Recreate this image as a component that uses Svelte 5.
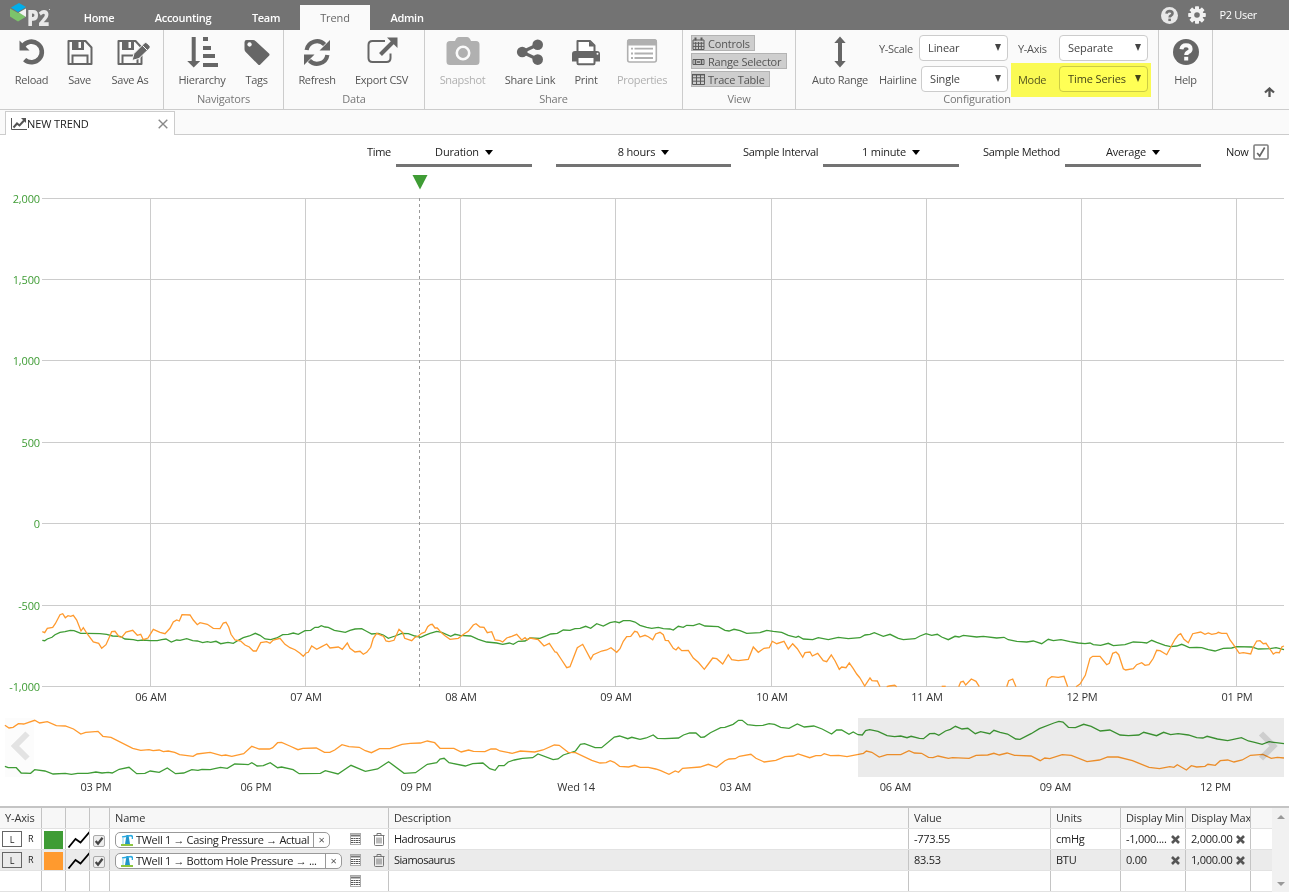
<script lang="ts">
  const menu = [
    { label: 'Home', width: 70 },
    { label: 'Accounting', width: 98 },
    { label: 'Team', width: 68 },
    { label: 'Trend', width: 70, active: true },
    { label: 'Admin', width: 74 },
  ];

  const groups = [
    {
      title: '', width: 164,
      tools: [
        { icon: 'reload', label: 'Reload', width: 47 },
        { icon: 'save', label: 'Save', width: 49 },
        { icon: 'saveas', label: 'Save As', width: 52 },
      ],
    },
    {
      title: 'Navigators', width: 120,
      tools: [
        { icon: 'hierarchy', label: 'Hierarchy', width: 60 },
        { icon: 'tag', label: 'Tags', width: 49 },
      ],
    },
    {
      title: 'Data', width: 141,
      tools: [
        { icon: 'refresh', label: 'Refresh', width: 50 },
        { icon: 'export', label: 'Export CSV', width: 79 },
      ],
    },
    {
      title: 'Share', width: 258,
      tools: [
        { icon: 'camera', label: 'Snapshot', width: 59, disabled: true },
        { icon: 'share', label: 'Share Link', width: 76 },
        { icon: 'print', label: 'Print', width: 36 },
        { icon: 'properties', label: 'Properties', width: 76, disabled: true },
      ],
    },
  ];

  const views = [
    { icon: 'calendar', label: 'Controls', width: 64 },
    { icon: 'range', label: 'Range Selector', width: 96 },
    { icon: 'grid', label: 'Trace Table', width: 79 },
  ];

  const GREEN = '#3f9c35';
  const ORANGE = '#ff9a2e';

  // A series is a list of blocks. Each block has its own start and sampling
  // resolution (units per pixel); y is always in thirds of a pixel.
  type Block = { x: number; res: number; pts: string };

  function line(block: Block, top: number) {
    return block.pts
      .split(' ')
      .map((p) => {
        const [x, y] = p.split(',').map(Number);
        return `${(block.x + x / block.res).toFixed(1)},${(top + y / 3).toFixed(1)}`;
      })
      .join(' ');
  }

  const casing: Block[] = [
    { x: 0, res: 3, pts: '127,151 134,152 142,147 156,142 165,134 180,127 195,125 211,121 222,122 242,130 260,130 300,131 320,133 338,138 360,139 375,147 400,149 413,152 430,150 450,152 472,152 485,149 498,147 514,156 530,150 540,151 560,146 578,152 592,153 608,158 622,155 632,157 648,154 662,161 684,157 700,160 715,151 730,143 748,138 766,130 780,136 795,147 812,149 830,144 848,134 865,133 880,129 895,133 915,122 932,121 945,112 955,112 964,107 975,111 985,112 1003,121 1020,124 1036,127 1050,121 1065,117 1085,116 1098,123 1115,132 1135,130 1150,135 1165,145 1185,138 1205,130 1225,131 1245,138 1262,142 1275,136 1290,130' },
    { x: 430, res: 3, pts: '0,130 20,124 35,127 62,139 75,133 90,136 122,138 145,148 170,156 200,159 218,163 238,159 250,163 265,154 285,153 300,144 330,145 350,137 362,132 382,130 400,120 420,121 435,116 450,115 467,109 482,115 500,101 520,108 540,98 555,95 568,98 580,92 600,92 615,96 630,106 650,112 665,115 685,112 700,116 720,117 730,120 745,109 760,112 770,106 790,107 808,101 825,108 865,110 885,121 897,123 912,118 930,122 950,130 990,128 1010,121 1030,124 1055,127 1075,136 1098,142 1105,139 1120,147 1148,149 1165,143 1195,149 1225,142 1255,146 1290,143' },
    { x: 860, res: 3, pts: '0,143 15,135 30,133 43,128 70,139 90,133 115,145 130,149 165,146 180,138 198,131 215,136 232,133 245,141 265,149 285,139 297,141 310,136 350,141 370,139 410,144 432,142 445,149 470,154 500,156 520,153 545,161 565,148 580,152 603,149 630,155 655,159 675,161 690,159 700,164 722,166 745,160 760,167 795,164 820,156 845,157 860,159 875,151 890,157 915,166 932,170 950,168 965,163 975,167 988,173 1010,172 1025,173 1045,179 1065,183 1090,175 1115,174 1130,170 1175,171 1195,177 1230,176 1248,173 1272,179' },
  ];

  const bottomHole: Block[] = [
    { x: 0, res: 3, pts: '127,125 134,128 142,115 158,112 166,101 180,74 188,71 196,83 204,77 212,79 220,76 230,90 243,123 250,113 262,132 280,156 296,160 305,175 318,164 328,142 335,125 345,124 357,140 365,142 378,126 398,121 412,136 422,133 430,149 444,144 460,118 480,127 495,131 510,115 520,96 530,90 538,93 546,74 570,75 580,90 592,104 600,98 622,103 640,115 660,116 670,99 678,97 686,111 693,133 705,150 722,153 735,165 748,171 760,183 769,183 782,158 800,155 810,160 820,150 840,145 855,163 870,173 885,179 900,190 910,199 918,189 925,187 935,168 950,178 965,170 980,162 990,174 1015,171 1027,178 1042,159 1050,175 1065,186 1080,184 1090,193 1100,187 1112,172 1120,145 1130,130 1145,137 1150,138 1158,153 1167,155 1182,151 1197,118 1208,128 1214,145 1235,152 1245,142 1255,138 1265,130 1275,126 1283,110 1290,104' },
    { x: 430, res: 3, pts: '0,104 7,103 15,114 22,114 33,127 45,137 60,148 85,145 105,130 115,124 130,105 138,101 150,111 162,112 172,128 185,125 195,150 210,152 218,156 230,144 245,139 260,133 275,150 285,143 292,150 300,144 325,149 342,168 358,160 375,186 380,187 395,210 410,233 420,230 442,173 458,163 482,208 490,194 515,183 530,180 543,173 560,187 570,176 580,154 590,140 602,139 614,124 622,126 630,141 645,136 655,140 668,149 677,132 690,127 700,134 706,151 715,152 730,175 738,180 745,172 755,182 775,181 790,204 805,217 823,238 835,222 848,204 860,206 878,222 895,194 905,209 925,212 955,208 970,171 985,187 1002,175 1018,173 1027,154 1040,161 1062,154 1075,177 1088,161 1102,176 1118,202 1125,188 1140,186 1147,198 1163,190 1180,212 1190,215 1204,195 1215,212 1228,238 1235,231 1248,233 1258,219 1270,236 1280,252 1290,264' },
    { x: 860, res: 3, pts: '0,264 14,288 30,264 36,272 52,273 60,290' },
    { x: 860, res: 3, pts: '80,290 88,288 104,286 110,290' },
    { x: 860, res: 3, pts: '245,289 257,289' },
    { x: 860, res: 3, pts: '296,290 302,276 310,274 317,285 334,267 348,274 358,290' },
    { x: 860, res: 3, pts: '440,290 446,272 458,267 468,290' },
    { x: 860, res: 3, pts: '558,290 564,268 575,260 595,262 612,259 623,290' },
    { x: 860, res: 3, pts: '648,290 660,282 676,256 690,205 698,199 720,199 740,224 748,220 758,190 768,186 776,194 790,236 797,240 820,236 830,224 845,218 855,226 867,224 880,205 890,181 900,182 920,194 928,179 945,148 955,135 962,131 972,148 985,158 998,131 1022,126 1035,133 1045,129 1055,133 1070,130 1075,127 1085,130 1100,130 1110,150 1120,163 1138,190 1150,188 1172,192 1178,175 1190,153 1200,152 1210,161 1218,160 1225,170 1240,192 1248,187 1258,188 1266,170 1272,168' },
  ];

  const casingDay: Block[] = [
    { x: 0, res: 2.45, pts: '12,184 20,188 40,188 52,204 75,205 85,194 110,198 130,207 160,205 175,208 190,205 215,205 235,201 250,204 265,202 275,204 292,193 316,187 335,206 355,205 368,198 390,202 410,189 430,206 450,204 470,194 485,196 495,193 515,194 540,187 557,190 575,177 600,178 608,179 617,173 630,183 645,182 662,173 680,188 690,186 718,194 733,206 785,205 797,197 828,207 860,181 895,199 925,192 952,170 990,205 1018,203 1047,178 1070,173 1078,162 1088,160 1100,173 1140,183 1158,176 1183,174 1200,191 1213,196 1222,182 1235,182 1245,171 1260,165 1280,160 1305,158 1318,147 1355,164 1367,162 1380,150 1410,138 1422,118 1432,116 1458,128 1474,128 1505,96 1518,93 1538,101 1548,97 1568,103' },
    { x: 640, res: 2.416, pts: '0,103 15,99 32,90 42,100 60,101 93,99 105,90 120,84 135,84 147,97 155,96 170,83 195,68 205,67 225,58 238,46 247,46 260,59 280,62 297,61 312,56 325,58 340,67 360,70 380,57 397,66 420,63 440,72 463,87 475,75 487,75 505,88 515,81 527,89 537,90 545,77 555,74 575,79 597,92 615,95 630,93 645,98 655,94 675,100 685,101 700,86 712,85 722,91 738,78 750,73 762,64 778,72 792,70 810,86 823,80 845,86 855,76 870,82 888,87 908,102 918,103 945,86 965,71 1000,54 1012,49 1022,51 1035,67 1052,68 1072,58 1090,64 1112,78 1135,75 1160,90 1180,92 1205,90 1217,82 1248,92 1265,82 1282,89 1300,86 1325,90 1345,98 1360,99 1370,94 1395,102 1420,107 1453,98 1470,108 1485,112 1503,118 1520,110 1556,116' },
  ];

  const bottomHoleDay: Block[] = [
    { x: 0, res: 2.45, pts: '12,61 22,69 32,67 45,56 58,57 85,46 97,54 116,50 138,62 160,63 180,72 198,87 210,82 240,79 252,94 272,97 325,130 345,136 365,134 375,137 390,135 400,140 412,138 428,142 440,149 473,154 483,147 515,142 543,152 553,150 568,154 597,146 617,124 635,132 660,132 668,128 680,113 690,112 710,123 730,134 742,130 775,129 795,142 808,142 820,135 838,119 855,125 880,127 895,137 910,143 930,131 955,131 985,118 1005,115 1030,114 1047,108 1065,113 1078,130 1100,130 1112,130 1130,141 1148,135 1160,139 1188,140 1203,132 1215,132 1225,138 1255,145 1275,138 1310,141 1330,135 1358,120 1370,121 1392,142 1410,143 1450,166 1470,174 1485,173 1495,167 1505,172 1518,184 1540,186 1555,181 1568,187' },
    { x: 640, res: 2.416, pts: '0,187 20,187 38,192 50,197 70,208 85,198 93,202 103,190 145,186 165,178 185,187 205,167 215,162 230,161 240,154 268,148 280,160 300,171 328,166 350,155 370,153 382,147 410,158 425,152 437,152 445,146 460,152 480,151 500,155 540,145 547,138 560,142 578,156 597,149 630,149 650,137 663,144 680,145 697,157 708,158 720,153 745,160 755,158 795,160 812,151 840,150 855,145 868,150 887,144 905,151 945,153 967,167 978,159 990,161 1020,149 1042,151 1080,170 1110,165 1130,156 1155,156 1190,167 1230,187 1255,191 1280,185 1290,187 1298,179 1320,195 1332,182 1345,186 1365,184 1372,178 1390,181 1402,167 1420,165 1435,171 1455,165 1475,151 1505,148 1525,160 1540,157 1556,159' },
  ];

  const yTicks = [
    { label: '2,000', y: 28.5 },
    { label: '1,500', y: 109.5 },
    { label: '1,000', y: 190.5 },
    { label: '500', y: 272.5 },
    { label: '0', y: 353.5 },
    { label: '-500', y: 435.5 },
    { label: '-1,000', y: 516.5 },
  ];
  const xTicks = [
    { label: '06 AM', x: 150.5 },
    { label: '07 AM', x: 305.5 },
    { label: '08 AM', x: 460.5 },
    { label: '09 AM', x: 615.5 },
    { label: '10 AM', x: 771.5 },
    { label: '11 AM', x: 926.5 },
    { label: '12 PM', x: 1081.5 },
    { label: '01 PM', x: 1236.5 },
  ];
  const dayTicks = [
    { label: '03 PM', x: 96 },
    { label: '06 PM', x: 256 },
    { label: '09 PM', x: 416 },
    { label: 'Wed 14', x: 576 },
    { label: '03 AM', x: 735.5 },
    { label: '06 AM', x: 895.5 },
    { label: '09 AM', x: 1055.5 },
    { label: '12 PM', x: 1215.5 },
  ];

  const traces = [
    { color: GREEN, name: 'TWell 1 → Casing Pressure → Actual', width: 215, description: 'Hadrosaurus', value: '-773.55', units: 'cmHg', min: '-1,000....', max: '2,000.00' },
    { color: ORANGE, name: 'TWell 1 → Bottom Hole Pressure → ...', width: 227, description: 'Siamosaurus', value: '83.53', units: 'BTU', min: '0.00', max: '1,000.00' },
  ];
</script>

{#snippet question(size: number, bg: string, fg: string)}
  <svg width={size} height={size} viewBox="0 0 26 26">
    <circle cx="13" cy="13" r="13" fill={bg} />
    <path d="M8.4 10.2Q9 6.3 13 6.3q4.6 0 4.600 3.600 0 2-2.200 3.100-2.200 1.200-2.200 3.100" fill="none" stroke={fg} stroke-width="4" />
    <rect x="11.2" y="17.8" width="4" height="3.7" fill={fg} />
  </svg>
{/snippet}

{#snippet glyph(name: string)}
  <svg class="glyph" width="40" height="32" viewBox="0 0 40 32">
    {#if name === 'reload'}
      <path d="M11 10.200A10.300 10.300 0 1 1 12.600 23.600" fill="none" stroke="currentColor" stroke-width="4.600" />
      <path d="M7.500 4.500v10h10z" fill="currentColor" />
    {:else if name === 'save' || name === 'saveas'}
      <path d="M8.500 5h17l6 6.500V28h-23z" fill="none" stroke="currentColor" stroke-width="2" stroke-linejoin="round" />
      <path d="M12 5h12v9H12zM18.500 6v6H21V6z" fill="currentColor" fill-rule="evenodd" />
      <path d="M12.500 28v-8.500h15V28" fill="none" stroke="currentColor" stroke-width="2" />
      {#if name === 'saveas'}
        <path d="M22 24.500l2-7 10.500-10.500q1.200-1 2.400 0l3 3q1 1 0 2L29 22.500z" fill="currentColor" stroke="#fafafa" />
        <path d="M32.500 9.500l5 5" stroke="#fafafa" />
      {/if}
    {:else if name === 'hierarchy'}
      <path d="M9.700 1h4v24h4.500l-6.500 6.500L5.200 25h4.500zM21 1h5v4h-5zM21 10h8v4h-8zM21 18h12v4H21zM21 27h15v4H21z" fill="currentColor" />
    {:else if name === 'tag'}
      <path d="M7.500 6.200q0-2.200 2.200-2.200H16q1.500 0 2.800 1.200L32 17.600q1.100 1.100 0 2.200l-8.700 8.700q-1.100 1-2.200 0L8.700 16q-1.200-1.300-1.200-2.800zM12.500 6.300a2.200 2.200 0 1 0 .1 0z" fill="currentColor" fill-rule="evenodd" />
    {:else if name === 'refresh'}
      <path d="M9.600 14a10.500 10.500 0 0 1 18-5.500M30.400 19a10.500 10.500 0 0 1-18 5.500" fill="none" stroke="currentColor" stroke-width="4.200" />
      <path d="M33 4v10.500H22.500zM7 29V18.500h10.500z" fill="currentColor" />
    {:else if name === 'export'}
      <path d="M23 5H10.500q-4 0-4 4v13q0 4 4 4h14q4 0 4-4v-4.500" fill="none" stroke="currentColor" stroke-width="2" />
      <path d="M18.500 18.500L31 6" stroke="currentColor" stroke-width="4" />
      <path d="M25 1.500h10.500V12z" fill="currentColor" />
    {:else if name === 'camera'}
      <path d="M12 5q1.500-4 4-4h8q2.500 0 4 4h5q3.500 0 3.500 3.500v17q0 3.500-3.500 3.500H7q-3.500 0-3.500-3.500v-17Q3.500 5 7 5z" fill="currentColor" />
      <circle cx="20" cy="17" r="6.200" fill="none" stroke="#fafafa" stroke-width="2.600" />
    {:else if name === 'share'}
      <path d="M28 8.500L12 16l16 7.500" fill="none" stroke="currentColor" stroke-width="3.200" />
      <circle cx="12.200" cy="16" r="5.300" fill="currentColor" />
      <circle cx="27.700" cy="8.700" r="5.300" fill="currentColor" />
      <circle cx="27.700" cy="23.600" r="5.300" fill="currentColor" />
    {:else if name === 'print'}
      <path d="M11.500 16V5H24l4.500 4.500V16" fill="#fff" stroke="currentColor" stroke-width="2" stroke-linejoin="round" />
      <path d="M23 5v5.500h5.500z" fill="currentColor" />
      <path d="M6 18q0-3 3-3h22q3 0 3 3v7.500H6z" fill="currentColor" />
      <rect x="11.500" y="21" width="17" height="7.200" rx="1" fill="#fff" stroke="currentColor" stroke-width="2" />
      <circle cx="31.500" cy="17.800" r="1" fill="#fff" />
    {:else if name === 'properties'}
      <rect x="5.700" y="4" width="28.600" height="22" rx="2" fill="#fff" stroke="currentColor" stroke-width="1.600" />
      <path d="M5 9.500V5.500Q5 3 7.500 3h25Q35 3 35 5.500v4z" fill="currentColor" />
      <path d="M9 12.700h2m1.500 0H31M9 17.500h2m1.500 0H31M9 22h2m1.500 0H31" stroke="currentColor" stroke-width="1.800" />
    {:else if name === 'auto'}
      <path d="M20 .5l5.700 6.500h-3.700v18h3.700L20 31.500 14.300 25H18V7h-3.700z" fill="currentColor" />
    {/if}
  </svg>
{/snippet}

{#snippet smallGlyph(name: string)}
  <svg width="13" height="13" viewBox="0 0 13 13" fill="none" stroke="#5a5a5a">
    {#if name === 'calendar'}
      <path d="M1 3h11v9.500H1zM1 6.200h11M1 9.400h11M3.700 5v7M6.500 5v7M9.300 5v7" />
      <path d="M3.500 .5v3M9.500 .5v3" stroke-width="2" />
    {:else if name === 'range'}
      <path d="M1 4.500h11v5H1z" />
      <path d="M3.500 4v6M9.500 4v6M5 7h3" stroke-width="1.500" />
    {:else}
      <path d="M.5 1.500h12v10H.5zM.5 4.800h12M.5 8.200h12M4.500 1.500v10M8.500 1.500v10" />
      <path d="M0 1.700h13" stroke-width="1.500" />
    {/if}
  </svg>
{/snippet}

{#snippet calculator()}
  <svg width="11" height="12" viewBox="0 0 11 12">
    <rect x=".5" y=".5" width="10" height="11" fill="#fff" stroke="#aaa" />
    <path d="M1 2.500h9" stroke="#777" stroke-width="2" />
    <path d="M1 5.500h9M1 7.500h9M1 9.500h9" stroke="#555" stroke-dasharray="2 .5" />
  </svg>
{/snippet}

<div class="app">
  <header>
    <div class="logo">
      <svg width="44" height="27" viewBox="0 0 44 27">
        <path d="M1 4.500L9 0l7 4-8 5z" fill="#00aeea" />
        <path d="M0 5.500L8 10l6.500-3.500V13l1 1L8 18.500 0 13.500z" fill="#7cc46b" />
        <path d="M9 9.500l7-4V14z" fill="#f2f2f2" />
        <text x="17" y="22.500" textLength="22" lengthAdjust="spacingAndGlyphs">P2</text>
        <circle cx="39.500" cy="6.500" r=".6" fill="#ddd" />
      </svg>
    </div>
    <nav>
      {#each menu as item}
        <span class="menu-item" class:active={item.active} style="width: {item.width}px">{item.label}</span>
      {/each}
    </nav>
    <div class="account">
      {@render question(17, '#e8e8e8', '#737373')}
      <svg width="18" height="18" viewBox="-9 -9 18 18">
        <g fill="#f2f2f2">
          <circle r="6.500" />
          {#each [0, 45, 90, 135] as angle}
            <rect x="-2" y="-8.800" width="4" height="17.600" rx=".7" transform="rotate({angle})" />
          {/each}
        </g>
        <circle r="2.800" fill="#737373" />
      </svg>
      <span>P2 User</span>
    </div>
  </header>

  <div class="ribbon">
    {#each groups as group}
      <section style="width: {group.width}px">
        <div class="tools">
          {#each group.tools as tool}
            <div class="tool" class:disabled={tool.disabled} style="width: {tool.width}px">
              {@render glyph(tool.icon)}
              <span>{tool.label}</span>
            </div>
          {/each}
        </div>
        <div class="title">{group.title}</div>
      </section>
    {/each}

    <section class="views">
      <div class="view-list">
        {#each views as view}
          <div class="view" style="width: {view.width}px">
            {@render smallGlyph(view.icon)}
            <span>{view.label}</span>
          </div>
        {/each}
      </div>
      <div class="title">View</div>
    </section>

    <section class="config">
      <div class="tools">
        <div class="tool auto">
          {@render glyph('auto')}
          <span>Auto Range</span>
        </div>
        <div class="fields">
          <div class="field"><span>Y-Scale</span><div class="select">Linear<i></i></div></div>
          <div class="field"><span>Hairline</span><div class="select narrow">Single<i></i></div></div>
        </div>
        <div class="fields second">
          <div class="field"><span>Y-Axis</span><div class="select">Separate<i></i></div></div>
          <div class="field"><span>Mode</span><div class="select">Time Series<i></i></div></div>
          <div class="highlight"></div>
        </div>
      </div>
      <div class="title">Configuration</div>
    </section>

    <section class="help">
      <div class="tool">
        <div class="help-icon">{@render question(26, '#666', '#fafafa')}</div>
        <span>Help</span>
      </div>
    </section>

    <div class="collapse">
      <svg width="11" height="10" viewBox="0 0 11 10">
        <path d="M1 5.500l4.500-4 4.500 4M5.500 2v8" fill="none" stroke="#555" stroke-width="2.300" />
      </svg>
    </div>
  </div>

  <div class="tabs">
    <div class="tab">
      <svg width="16" height="14" viewBox="0 0 16 14">
        <path d="M.5 1v11.500H16" fill="none" stroke="#555" />
        <path d="M2.500 10.500l3.500-4 2.500 2 4.500-5" fill="none" stroke="#555" stroke-width="2" />
        <path d="M10 1h5v5z" fill="#555" />
      </svg>
      <span>NEW TREND</span>
      <svg class="close" width="10" height="10" viewBox="0 0 10 10">
        <path d="M.7 .7l8.600 8.600M9.300 .7L.7 9.300" stroke="#888" stroke-width="1.400" />
      </svg>
    </div>
  </div>

  <div class="controls">
    <span class="caption time">Time</span>
    <div class="picker">Duration<i></i></div>
    <div class="picker wide">8 hours<i></i></div>
    <span class="caption interval">Sample Interval</span>
    <div class="picker">1 minute<i></i></div>
    <span class="caption method">Sample Method</span>
    <div class="picker">Average<i></i></div>
    <span class="caption now">Now</span>
    <svg class="check" width="16" height="16" viewBox="0 0 16 16">
      <rect x="1" y="1" width="14" height="14" rx="1" fill="#fff" stroke="#808080" stroke-width="1.600" />
      <path d="M4.200 9l2.500 3 5-8.500" fill="none" stroke="#666" stroke-width="1.700" />
    </svg>
  </div>

  <svg class="chart" width="1289" height="540" viewBox="0 0 1289 540">
    <g stroke="#ccc">
      {#each yTicks as t}
        <path d="M42 {t.y}H1284" />
      {/each}
      {#each xTicks as t}
        <path d="M{t.x} 28V517" />
      {/each}
    </g>
    {#each yTicks as t}
      <text class="y" x="40" y={t.y + 4} text-anchor="end">{t.label}</text>
    {/each}
    {#each xTicks as t}
      <text x={t.x + 0.5} y="531" text-anchor="middle">{t.label}</text>
    {/each}
    <path d="M419.500 28V517" stroke="#999" stroke-dasharray="3 3" />
    <path d="M412.500 5h15L420 19.500z" fill={GREEN} />
    {#each casing as block}
      <polyline points={line(block, 420)} stroke={GREEN} />
    {/each}
    {#each bottomHole as block}
      <polyline points={line(block, 420)} stroke={ORANGE} />
    {/each}
  </svg>

  <svg class="chart" width="1289" height="96" viewBox="0 0 1289 96">
    <rect x="5" y="8" width="29" height="59" fill="#fcfcfc" />
    {#each casingDay as block}
      <polyline points={line(block, -5)} stroke={GREEN} />
    {/each}
    {#each bottomHoleDay as block}
      <polyline points={line(block, -5)} stroke={ORANGE} />
    {/each}
    <rect x="858" y="8" width="426" height="59" fill="#000" fill-opacity=".08" />
    <path d="M27.500 23.500L15 36l12.500 12.500" fill="none" stroke="#e3e3e3" stroke-width="6" />
    <path d="M1261 23.500l12.500 12.500-12.500 12.500" fill="none" stroke="#000" stroke-opacity=".12" stroke-width="6" />
    {#each dayTicks as t}
      <text x={t.x} y="81" text-anchor="middle">{t.label}</text>
    {/each}
  </svg>

  <div class="traces">
    <div class="table">
      <div class="row head">
        <div>Y-Axis</div><div></div><div></div><div></div><div>Name</div><div>Description</div>
        <div>Value</div><div>Units</div><div>Display Min</div><div>Display Max</div><div></div>
      </div>
      {#each traces as trace}
        <div class="row">
          <div class="side"><b>L</b><span>R</span></div>
          <div class="swatch"><i style="background: {trace.color}"></i></div>
          <div class="pen">
            <svg width="24" height="20" viewBox="0 0 24 20">
              <path d="M1.500 17.500L8.500 9l5 3.500 9-10.500" fill="none" stroke="#000" stroke-width="1.800" />
            </svg>
          </div>
          <div class="tick">
            <svg width="12" height="12" viewBox="0 0 12 12">
              <rect x=".5" y=".5" width="11" height="11" rx="1.500" fill="#eee" stroke="#aaa" />
              <path d="M2.700 6l2.300 2.700 4.500-6" fill="none" stroke="#444" stroke-width="2.300" />
            </svg>
          </div>
          <div class="name">
            <div class="pill" style="width: {trace.width}px">
              <svg width="12" height="12" viewBox="0 0 12 12">
                <path d="M0 10h12v2H0z" fill="#8cc63f" />
                <path d="M5.500 1h2l1.500 9H4z" fill="#2196c9" />
                <path d="M1 3l9-1.500 1.500 1v2.500" fill="none" stroke="#29a9e0" stroke-width="1.600" />
                <path d="M2 3v7" stroke="#9cd8f0" stroke-width="1.200" />
              </svg>
              <span>{trace.name}</span>
              <em>×</em>
            </div>
            <div class="actions">
              {@render calculator()}
              <svg width="12" height="13" viewBox="0 0 12 13" fill="none" stroke="#777">
                <path d="M.5 2.500h11M4 2.500v-2h4v2M1.500 2.500v9q0 1 1 1h7q1 0 1-1v-9M4 4.500v6M6 4.500v6M8 4.500v6" />
              </svg>
            </div>
          </div>
          <div class="description">{trace.description}</div>
          <div>{trace.value}</div>
          <div>{trace.units}</div>
          {#each [trace.min, trace.max] as limit}
            <div class="limit">
              {limit}
              <svg width="9" height="9" viewBox="0 0 9 9"><path d="M1 1l7 7M8 1L1 8" stroke="#555" stroke-width="2.600" /></svg>
            </div>
          {/each}
          <div></div>
        </div>
      {/each}
      <div class="row">
        <div></div><div></div><div></div><div></div>
        <div class="name"><div class="actions lone">{@render calculator()}</div></div>
        <div></div><div></div><div></div><div></div><div></div><div></div>
      </div>
    </div>
    <div class="scrollbar"><i class="up"></i><i class="down"></i></div>
  </div>
</div>

<style>
  :global(body) {
    margin: 0;
    background: #fff;
  }
  .app {
    width: 1289px;
    height: 892px;
    overflow: hidden;
    display: flex;
    flex-direction: column;
    font-family: 'Open Sans', 'Noto Sans', sans-serif;
    font-size: 11px;
    letter-spacing: -0.3px;
    color: #333;
    background: #fff;
  }
  svg { display: block; flex: none; }

  /* Top bar */
  header {
    display: flex;
    flex: none;
    height: 30px;
    background: #737373;
    color: #fff;
  }
  .logo { width: 54px; padding: 3px 0 0 10px; }
  .logo text {
    font: 800 22px 'Open Sans', sans-serif;
    fill: #e8e8e8;
  }
  nav { display: flex; align-items: flex-end; }
  .menu-item {
    height: 25px;
    line-height: 26px;
    text-align: center;
    font-weight: 600;
  }
  .menu-item.active {
    background: #fafafa;
    color: #666;
    font-weight: 400;
    letter-spacing: -0.1px;
  }
  .account {
    display: flex;
    align-items: center;
    gap: 10px;
    margin-left: auto;
    padding-right: 32px;
  }
  .account span { margin: -1px 0 0 3px; }

  /* Ribbon */
  .ribbon {
    display: flex;
    flex: none;
    height: 79px;
    background: #fafafa;
    border-bottom: 1px solid #ccc;
    color: #555;
  }
  section {
    box-sizing: border-box;
    display: flex;
    flex-direction: column;
    flex: none;
    border-right: 1px solid #ccc;
  }
  .tools { display: flex; height: 61px; padding-left: 8px; }
  .title {
    text-align: center;
    line-height: 16px;
    letter-spacing: -0.2px;
    color: #777;
  }
  .tool {
    display: flex;
    flex-direction: column;
    align-items: center;
    padding-top: 6px;
    white-space: nowrap;
  }
  .tool span { line-height: 16px; margin-top: 4px; }
  .tool .glyph { color: #666; }
  .tool.disabled, .tool.disabled .glyph { color: #b0b0b0; }

  .views { width: 113px; }
  .view-list {
    display: flex;
    flex-direction: column;
    gap: 2px;
    height: 56px;
    padding: 5px 0 0 8px;
  }
  .view {
    box-sizing: border-box;
    display: flex;
    align-items: center;
    gap: 2px;
    height: 16px;
    border: 1px solid #b3b3b3;
    background: #cecece;
    white-space: nowrap;
    letter-spacing: -0.2px;
  }
  .view span { padding-left: 1px; }

  .config { width: 363px; }
  .config .tools { padding-left: 6px; }
  .auto { width: 76px; }
  .fields {
    display: flex;
    flex-direction: column;
    gap: 5px;
    width: 133px;
    padding-top: 5px;
  }
  .fields.second {
    position: relative;
    width: 140px;
  }
  .field {
    display: flex;
    align-items: center;
    justify-content: space-between;
    width: 129px;
    padding-left: 1px;
  }
  .second .field { padding-left: 7px; }
  .select {
    box-sizing: border-box;
    display: flex;
    align-items: center;
    justify-content: space-between;
    width: 89px;
    height: 26px;
    padding: 0 6px 1px 8px;
    border: 1px solid #ccc;
    border-radius: 4px;
    background: #fff;
    color: #444;
    white-space: nowrap;
    letter-spacing: -0.1px;
  }
  .second .field { width: 130px; }
  .select.narrow { width: 87px; }
  .select i {
    border: 3.5px solid transparent;
    border-top: 7px solid #444;
    border-bottom: 0;
  }
  .highlight {
    position: absolute;
    left: 0;
    top: 33px;
    width: 140px;
    height: 34px;
    background: #ffff55;
    mix-blend-mode: multiply;
  }
  .help { width: 54px; }
  .help-icon { height: 29px; padding-top: 3px; }
  .collapse { margin: 57px 0 0 51px; }

  /* Document tabs */
  .tabs {
    box-sizing: border-box;
    display: flex;
    flex: none;
    height: 25px;
    padding-left: 5px;
    background: #fafafa;
    border-bottom: 1px solid #ccc;
  }
  .tab {
    box-sizing: border-box;
    display: flex;
    align-items: center;
    width: 170px;
    height: 24px;
    margin-top: 1px;
    padding: 0 6px 0 5px;
    border: 1px solid #ccc;
    border-bottom: 0;
    background: #fff;
    color: #222;
    letter-spacing: -0.1px;
  }
  .close { margin-left: auto; }

  /* Query controls */
  .controls {
    display: flex;
    flex: none;
    height: 35px;
    color: #222;
  }
  .caption { line-height: 34px; white-space: nowrap; }
  .picker {
    box-sizing: border-box;
    display: flex;
    align-items: center;
    justify-content: center;
    gap: 6px;
    width: 136px;
    height: 32px;
    border-bottom: 3px solid #737373;
    padding-top: 4px;
    letter-spacing: -0.2px;
  }
  .picker.wide { width: 175px; margin-left: 24px; }
  .picker i {
    margin-top: 1px;
    border: 4px solid transparent;
    border-top: 5px solid #000;
    border-bottom: 0;
  }
  .time { width: 29px; margin-left: 367px; }
  .interval { width: 80px; margin-left: 12px; }
  .method { width: 82px; margin-left: 24px; }
  .now { width: 27px; margin-left: 25px; }
  .check { margin-top: 9px; }

  .chart { font-size: 11px; letter-spacing: -0.15px; }
  .chart text { fill: #333; }
  .chart text.y { fill: #3f9c35; }
  .chart polyline { fill: none; stroke-width: 1.3; }

  /* Trace table */
  .traces {
    display: flex;
    flex: none;
    border-top: 2px solid #c4c4c4;
  }
  .row {
    display: grid;
    grid-template-columns: 42px 24px 24px 20px 279px 520px 142px 70px 65px 65px 21px;
    height: 20px;
    border-bottom: 1px solid #e2e2e2;
    line-height: 20px;
    color: #222;
    letter-spacing: -0.25px;
  }
  .row:nth-child(3) { background: #ebebeb; }
  .row.head { background: #f7f7f7; color: #333; letter-spacing: -0.15px; }
  .row > div {
    box-sizing: border-box;
    padding-left: 5px;
    border-right: 1px solid #c4c4c4;
    white-space: nowrap;
    overflow: hidden;
  }
  .row > div:last-child { border-right: 0; }
  .row > .description { letter-spacing: -0.5px; }
  .row > .side {
    display: flex;
    gap: 6px;
    padding: 2px 0 0 2px;
    line-height: 15px;
    font-size: 9px;
  }
  .side b {
    box-sizing: border-box;
    width: 20px;
    height: 16px;
    border: 1px solid #666;
    text-align: center;
    font-weight: 400;
  }
  .row > .swatch { padding: 2px 0 0 2px; }
  .swatch i { display: block; width: 19px; height: 18px; }
  .row > .pen { padding: 1px 0 0 1px; }
  .row > .tick { padding: 6px 0 0 3px; }
  .row > .name { display: flex; align-items: center; justify-content: space-between; }
  .pill {
    box-sizing: border-box;
    display: flex;
    align-items: center;
    height: 16px;
    margin-top: 1px;
    padding-left: 5px;
    border: 1px solid #999;
    border-radius: 5px;
    background: #fff;
    line-height: 14px;
    letter-spacing: -0.32px;
  }
  .pill span { margin-left: 3px; }
  .pill em {
    width: 15px;
    margin-left: auto;
    border-left: 1px solid #999;
    text-align: center;
    font-style: normal;
    color: #555;
  }
  .actions { display: flex; align-items: center; gap: 12px; margin-right: 3px; }
  .actions.lone { margin: 0 27px 0 auto; }
  .row > .limit {
    display: flex;
    align-items: center;
    justify-content: space-between;
    padding-right: 5px;
  }
  .scrollbar {
    display: flex;
    flex-direction: column;
    align-items: center;
    justify-content: space-between;
    box-sizing: border-box;
    width: 17px;
    height: 84px;
    padding: 7px 0 6px;
    background: #f1f1f1;
  }
  .scrollbar i { border: 4px solid transparent; }
  .scrollbar .up { border-top: 0; border-bottom-color: #999; }
  .scrollbar .down { border-bottom: 0; border-top-color: #999; }
</style>
